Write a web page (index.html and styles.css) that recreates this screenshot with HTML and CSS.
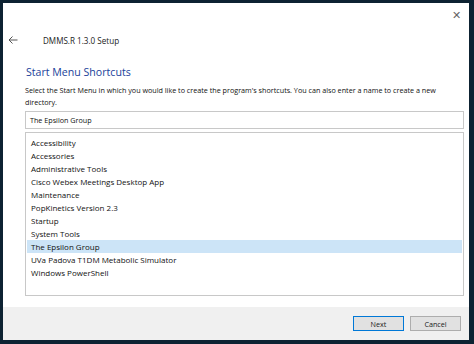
FILE: index.html
```html
<!DOCTYPE html>
<html>
<head>
    <title>DMMS.R 1.3.0 Setup</title>
    <link rel="stylesheet" href="styles.css">
</head>
<body>
    <div class="window">
        <div class="titlebar">
            <span class="close">&#x2715;</span>
        </div>
        <div class="header">
            <svg class="back" width="10" height="8" viewBox="0 0 10 8">
                <path d="M9.5 4H1M4.5 0.5L1 4l3.5 3.5" fill="none" stroke="#555" stroke-width="1"/>
            </svg>
            <span class="app-title">DMMS.R 1.3.0 Setup</span>
        </div>
        <div class="content">
            <h2>Start Menu Shortcuts</h2>
            <p class="desc">Select the Start Menu in which you would like to create the program's shortcuts. You can also enter a name to create a new directory.</p>
            <div class="input-box">The Epsilon Group</div>
            <ul class="list">
                <li>Accessibility</li>
                <li>Accessories</li>
                <li>Administrative Tools</li>
                <li>Cisco Webex Meetings Desktop App</li>
                <li>Maintenance</li>
                <li>PopKinetics Version 2.3</li>
                <li>Startup</li>
                <li>System Tools</li>
                <li class="selected">The Epsilon Group</li>
                <li>UVa Padova T1DM Metabolic Simulator</li>
                <li>Windows PowerShell</li>
            </ul>
        </div>
        <div class="footer">
            <button class="button primary">Next</button>
            <button class="button">Cancel</button>
        </div>
    </div>
</body>
</html>
```

FILE: styles.css
```css
body {
    margin: 0;
    padding: 3px 5px 4px 3px;
    background-color: #0d2232;
    font-family: "Open Sans", "Noto Sans", sans-serif;
    color: #1a1a1a;
}
.window {
    height: 337px;
    background-color: #fff;
    display: flex;
    flex-direction: column;
}
.titlebar {
    height: 22px;
    display: flex;
    justify-content: flex-end;
    align-items: center;
    padding-right: 8px;
}
.close {
    font-size: 11px;
    color: #666;
    line-height: 1;
}
.header {
    height: 30px;
    display: flex;
    align-items: center;
    padding-left: 5px;
}
.back {
    display: block;
}
.app-title {
    margin-left: 25px;
    font-size: 8.1px;
    color: #222;
}
.content {
    flex: 1;
    padding: 0 5px 0 22px;
}
h2 {
    margin: 10px 0 5px 1px;
    font-size: 10.6px;
    font-weight: normal;
    color: #1a3f9a;
    line-height: 14px;
}
.desc {
    margin: 0 0 3px 0;
    font-size: 7.2px;
    line-height: 12px;
    color: #111;
}
.input-box {
    height: 16px;
    border: 1px solid #c8c8c8;
    padding-left: 4px;
    font-size: 7.2px;
    line-height: 16px;
    color: #111;
}
.list {
    list-style: none;
    margin: 3px 0 0 0;
    padding: 3px 1px;
    height: 164px;
    border: 1px solid #c8c8c8;
    box-sizing: border-box;
}
.list li {
    height: 13px;
    line-height: 13px;
    padding-left: 4px;
    font-size: 8px;
    color: #111;
}
.list li.selected {
    background-color: #cce4f7;
}
.footer {
    height: 33px;
    background-color: #f0f0f0;
    display: flex;
    justify-content: flex-end;
    align-items: center;
    gap: 6px;
    padding-right: 8px;
}
.button {
    width: 51px;
    height: 15px;
    padding: 0;
    font-family: inherit;
    font-size: 7.2px;
    color: #1a1a1a;
    background-color: #e1e1e1;
    border: 1px solid #adadad;
}
.button.primary {
    border-color: #0078d7;
}
```
